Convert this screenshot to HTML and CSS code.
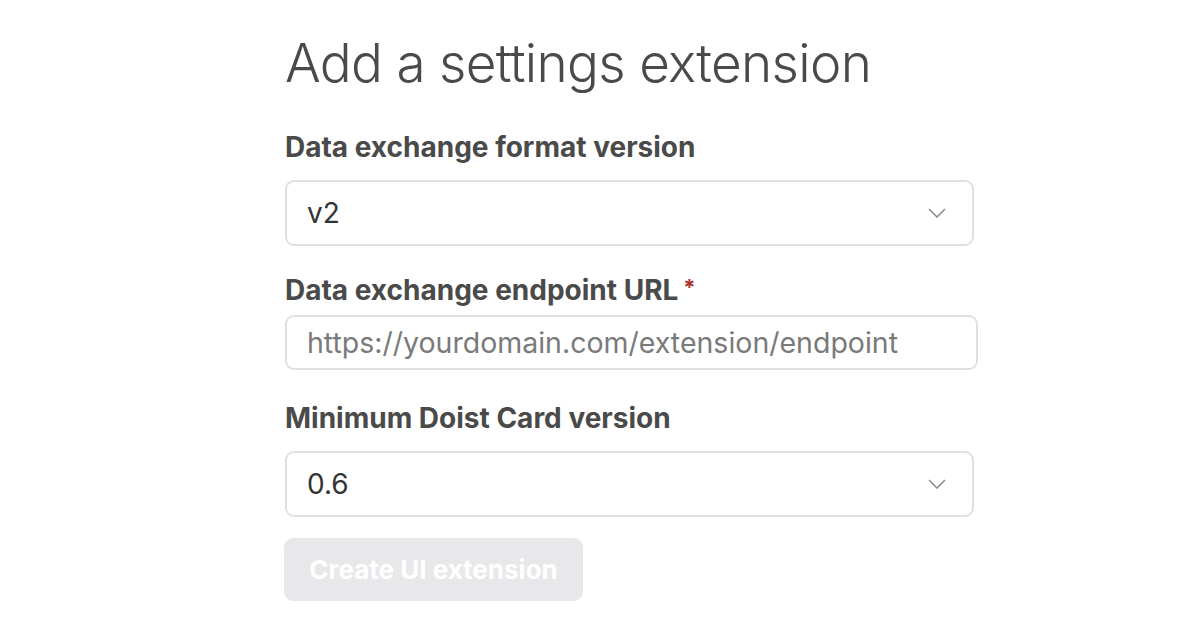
FILE: index.html
```html
<!DOCTYPE html>
<html lang="en">
<head>
<meta charset="utf-8">
<title>Add a settings extension</title>
<link rel="stylesheet" href="styles.css">
</head>
<body>
<main class="page">
  <h1 class="title">Add a settings extension</h1>
  <form class="form">
    <div class="field">
      <label class="label">Data exchange format version</label>
      <div class="select">
        <span class="value">v2</span>
        <svg class="chevron" viewBox="0 0 18 10" width="18" height="10"><path d="M1 1 L9 9 L17 1" fill="none" stroke="#8a8a8a" stroke-width="1.5"/></svg>
      </div>
    </div>
    <div class="field field-url">
      <label class="label">Data exchange endpoint URL<span class="req">*</span></label>
      <div class="input"><span class="placeholder">https://yourdomain.com/extension/endpoint</span></div>
    </div>
    <div class="field field-last">
      <label class="label">Minimum Doist Card version</label>
      <div class="select">
        <span class="value">0.6</span>
        <svg class="chevron" viewBox="0 0 18 10" width="18" height="10"><path d="M1 1 L9 9 L17 1" fill="none" stroke="#8a8a8a" stroke-width="1.5"/></svg>
      </div>
    </div>
    <button type="button" class="button" disabled>Create UI extension</button>
  </form>
</main>
</body>
</html>
```
FILE: styles.css
```css
* { box-sizing: border-box; }
html, body { margin: 0; padding: 0; background: #fff; }
body { font-family: Inter, Roboto, sans-serif; color: #444; }
.page { padding: 30px 0 0 285px; }
.title {
  margin: 0;
  font-size: 53px;
  font-weight: 300;
  color: #4a4a4a;
  line-height: 66px;
  letter-spacing: -0.68px;
}
.form { display: flex; flex-direction: column; margin-top: 35px; }
.field { display: flex; flex-direction: column; }
.label {
  font-size: 28px;
  font-weight: 700;
  color: #4a4a4a;
  line-height: 32px;
  margin-bottom: 17px;
}
.field-url .label { margin-bottom: 9px; }
.req { color: #a8342c; font-size: 22px; margin-left: 5px; vertical-align: top; line-height: 26px; }
.select {
  width: 689px;
  height: 66px;
  border: 2px solid #e0e0e0;
  border-radius: 9px;
  display: flex;
  align-items: center;
  justify-content: space-between;
  padding: 0 26px 0 20px;
  margin-bottom: 28px;
}
.field-last .select { margin-bottom: 21px; }
.value { font-size: 28px; color: #333; }
.chevron { display: block; }
.input {
  width: 693px;
  height: 55px;
  border: 2px solid #e0e0e0;
  border-radius: 9px;
  display: flex;
  align-items: center;
  padding: 0 20px;
  margin-bottom: 32px;
}
.placeholder { font-size: 28.5px; color: #7a7a7a; }
.button {
  align-self: flex-start;
  margin-left: -1px;
  width: 299px;
  height: 63px;
  border: 0;
  border-radius: 9px;
  background: #e8e8eb;
  color: #fff;
  font-family: Inter, Roboto, sans-serif;
  font-size: 26px;
  font-weight: 700;
}
```
